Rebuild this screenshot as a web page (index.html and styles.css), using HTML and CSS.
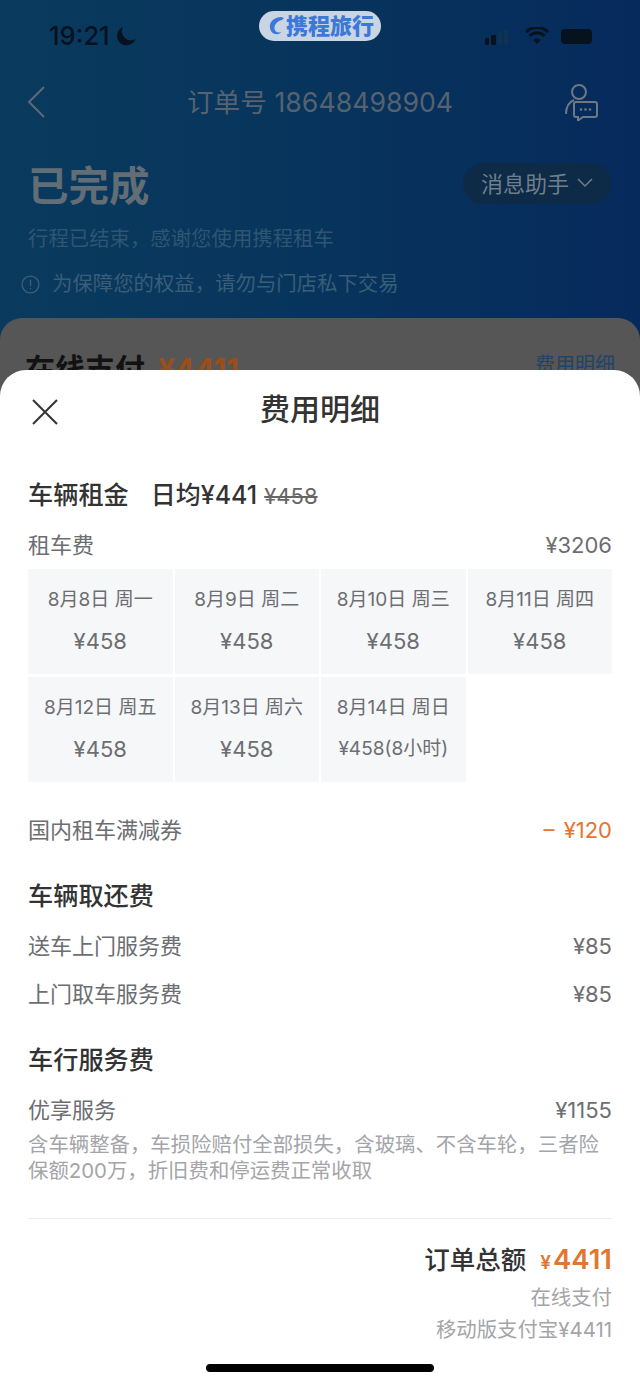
FILE: index.html
```html
<!DOCTYPE html>
<html lang="zh-CN">
<head>
    <meta charset="UTF-8">
    <meta name="viewport" content="width=device-width, initial-scale=1.0">
    <title>费用明细</title>
    <link rel="stylesheet" href="styles.css">
</head>
<body>
    <div class="page">
        <!-- Dimmed order page behind the sheet -->
        <div class="order">
            <div class="status-bar">
                <div class="status-time">
                    <span>19:21</span>
                    <svg width="20" height="20" viewBox="0 0 20 20"><path d="M7 1a9.500 9.500 0 1 0 12.500 12A9 9 0 0 1 7 1z" fill="#07121f"/></svg>
                </div>
                <div class="brand">
                    <svg width="20" height="22" viewBox="0 0 20 22"><path d="M15 2C8 2 3 7 4 13c.6 4 4 7 8 6 1.500-.4 2.500-1 3-2-3 1-6 0-6.500-3C8 10 11 6 16 5l2-2z" fill="#3b78d8"/></svg>
                    <span>携程旅行</span>
                </div>
                <div class="status-icons">
                    <svg class="signal" width="26" height="16" viewBox="0 0 26 16"><rect x="0" y="9" width="4" height="7" rx="1" fill="#07121f"/><rect x="6" y="6" width="5" height="10" rx="1" fill="#07121f"/><rect x="13" y="3" width="4" height="13" rx="1" fill="#0f3353"/><rect x="19" y="0" width="4" height="16" rx="1" fill="#0f3353"/></svg>
                    <svg class="wifi" width="24" height="18" viewBox="0 0 24 18"><path d="M12 17l-3.500-4a5 5 0 0 1 7 0zM5.500 10L3.500 7.800a12 12 0 0 1 17 0L18.500 10a9 9 0 0 0-13 0zM2 6.200L0 4a17 17 0 0 1 24 0l-2 2.200a14 14 0 0 0-20 0z" fill="#07121f"/></svg>
                    <div class="battery"></div>
                </div>
            </div>

            <div class="nav">
                <svg class="nav-back" width="20" height="32" viewBox="0 0 20 32"><path d="M18 1L3 16l15 15" fill="none" stroke="#5c6b78" stroke-width="2"/></svg>
                <div class="nav-title">订单号 18648498904</div>
                <svg class="nav-user" width="36" height="38" viewBox="0 0 36 38"><g fill="none" stroke="#6d7883" stroke-width="2"><circle cx="15" cy="9" r="7"/><path d="M2 31c0-7 3-12 8-14"/><path d="M12 19h19a2 2 0 0 1 2 2v11a2 2 0 0 1-2 2H19l-5 3.500V34h-2a2 2 0 0 1-2-2V21a2 2 0 0 1 2-2z"/></g><g fill="#6d7883"><circle cx="17" cy="26.500" r="1.300"/><circle cx="21.500" cy="26.500" r="1.300"/><circle cx="26" cy="26.500" r="1.300"/></g></svg>
            </div>

            <div class="state-row">
                <h1 class="state-title">已完成</h1>
                <div class="helper">
                    <span class="helper-text">消息助手</span>
                    <svg width="16" height="10" viewBox="0 0 16 10"><path d="M1 1l7 7 7-7" fill="none" stroke="#6d7f8e" stroke-width="1.500"/></svg>
                </div>
            </div>
            <p class="state-sub">行程已结束，感谢您使用携程租车</p>
            <div class="notice">
                <svg width="19" height="19" viewBox="0 0 18 18"><circle cx="9" cy="9" r="8" fill="none" stroke="#3f5f78" stroke-width="1.200"/><path d="M9 4.500v6M9 12v1.500" stroke="#3f5f78" stroke-width="1.200"/></svg>
                <span>为保障您的权益，请勿与门店私下交易</span>
            </div>

            <div class="pay-card">
                <div class="pay-left"><span>在线支付</span><span class="pay-amount">¥4411</span></div>
                <div class="pay-link">费用明细</div>
            </div>
        </div>

        <!-- Fee detail sheet -->
        <div class="sheet">
            <div class="sheet-head">
                <svg class="sheet-close" width="28" height="28" viewBox="0 0 28 28"><path d="M2 2l24 24M26 2L2 26" fill="none" stroke="#333" stroke-width="2"/></svg>
                <h2 class="sheet-title">费用明细</h2>
            </div>

            <div class="section-head rent-head">
                <span class="section-name">车辆租金</span>
                <span class="daily">日均¥441</span>
                <s class="daily-old">¥458</s>
            </div>
            <div class="row"><span>租车费</span><span>¥3206</span></div>

            <div class="days">
                <div class="day"><div class="day-date">8月8日 周一</div><div class="day-price">¥458</div></div>
                <div class="day"><div class="day-date">8月9日 周二</div><div class="day-price">¥458</div></div>
                <div class="day"><div class="day-date">8月10日 周三</div><div class="day-price">¥458</div></div>
                <div class="day"><div class="day-date">8月11日 周四</div><div class="day-price">¥458</div></div>
                <div class="day"><div class="day-date">8月12日 周五</div><div class="day-price">¥458</div></div>
                <div class="day"><div class="day-date">8月13日 周六</div><div class="day-price">¥458</div></div>
                <div class="day"><div class="day-date">8月14日 周日</div><div class="day-price day-price-small">¥458(8小时)</div></div>
            </div>

            <div class="row coupon-row"><span>国内租车满减券</span><span class="discount">– ¥120</span></div>

            <div class="section-head"><span class="section-name">车辆取还费</span></div>
            <div class="row"><span>送车上门服务费</span><span>¥85</span></div>
            <div class="row"><span>上门取车服务费</span><span>¥85</span></div>

            <div class="section-head"><span class="section-name">车行服务费</span></div>
            <div class="row"><span>优享服务</span><span>¥1155</span></div>
            <p class="service-note">含车辆整备，车损险赔付全部损失，含玻璃、不含车轮，三者险保额200万，折旧费和停运费正常收取</p>

            <div class="total">
                <div class="total-line">
                    <span class="total-label">订单总额</span>
                    <span class="total-amount"><small>¥</small>4411</span>
                </div>
                <div class="total-note">在线支付</div>
                <div class="total-note">移动版支付宝¥4411</div>
            </div>

            <div class="home-bar"></div>
        </div>
    </div>
</body>
</html>
```

FILE: styles.css
```css
* {
    margin: 0;
    padding: 0;
    box-sizing: border-box;
}

body {
    width: 640px;
    height: 1384px;
    overflow: hidden;
    background: #fff;
    font-family: Inter, "Noto Sans CJK SC", sans-serif;
}

.page {
    position: relative;
    width: 640px;
    height: 1384px;
    overflow: hidden;
}

/* Order page (dimmed) */
.order {
    height: 420px;
    background: linear-gradient(90deg, #0a3a5e 0%, #07345c 50%, #062a5c 100%);
}

.status-bar {
    height: 72px;
    padding: 18px 48px 0 49px;
    display: flex;
    justify-content: space-between;
    align-items: flex-start;
    position: relative;
}

.status-time {
    display: flex;
    align-items: center;
    gap: 6px;
    color: #07121f;
    font-size: 25.5px;
    font-weight: 500;
    line-height: 36px;
}

.brand {
    position: absolute;
    left: 259px;
    top: 11px;
    width: 122px;
    height: 30px;
    border-radius: 15px;
    background: #c9d5e3;
    display: flex;
    align-items: center;
    justify-content: center;
    color: #3b78d8;
    font-size: 22px;
    font-weight: 900;
    line-height: 30px;
    white-space: nowrap;
}

.status-icons {
    display: flex;
    align-items: center;
    height: 36px;
}

.signal {
    margin-top: 2px;
    margin-right: 14px;
}

.wifi {
    margin-right: 12px;
}

.battery {
    width: 31px;
    height: 15px;
    border-radius: 4px;
    background: #07121f;
}

.nav {
    height: 60px;
    padding: 0 26px;
    display: grid;
    grid-template-columns: 1fr auto 1fr;
    align-items: center;
}

.nav-title {
    color: #56626f;
    font-size: 26.7px;
    line-height: 60px;
}

.nav-user {
    justify-self: end;
    margin-right: 14px;
}

.state-row {
    margin-top: 20px;
    padding: 0 28px;
    height: 70px;
    display: flex;
    justify-content: space-between;
    align-items: center;
}

.state-title {
    color: #626d75;
    font-size: 40.5px;
    font-weight: 700;
    line-height: 70px;
}

.helper {
    height: 41px;
    width: 149px;
    margin-bottom: 8px;
    padding-left: 18px;
    border-radius: 21px;
    background: #0d2a47;
    color: #6d7f8e;
    font-size: 22px;
    display: flex;
    align-items: center;
    gap: 8px;
}

.helper-text {
    margin-bottom: 3px;
}

.state-sub {
    padding-left: 28px;
    color: #2f5570;
    font-size: 20.4px;
    line-height: 34px;
}

.notice {
    margin-top: 11px;
    padding-left: 21px;
    display: flex;
    align-items: center;
    gap: 12px;
    color: #3a5d78;
    font-size: 20.4px;
    line-height: 34px;
}

.pay-card {
    margin-top: 17px;
    height: 102px;
    padding: 33px 25px 0 25px;
    border-radius: 22px 22px 0 0;
    background: #565656;
    display: flex;
    justify-content: space-between;
    align-items: flex-start;
}

.pay-left {
    display: flex;
    align-items: baseline;
    gap: 13px;
    color: #121212;
    font-size: 30px;
    font-weight: 700;
    line-height: 36px;
}

.pay-amount {
    color: #9a4f1a;
    font-size: 29.5px;
}

.pay-link {
    margin-top: -4px;
    color: #1f4468;
    font-size: 20px;
    line-height: 36px;
}

/* Fee detail sheet */
.sheet {
    position: absolute;
    left: 0;
    right: 0;
    top: 370px;
    bottom: 0;
    padding: 0 28px;
    background: #fff;
    border-radius: 26px 26px 0 0;
    color: #6c6e72;
}

.sheet-head {
    position: relative;
    height: 80px;
    display: flex;
    align-items: center;
    justify-content: center;
}

.sheet-close {
    position: absolute;
    left: 3px;
    top: 28px;
}

.sheet-title {
    color: #333;
    font-size: 30px;
    font-weight: 500;
    line-height: 78px;
    height: 80px;
}

.section-head {
    height: 36px;
    margin-top: 24px;
    display: flex;
    align-items: baseline;
    color: #333;
    font-weight: 500;
    line-height: 36px;
    white-space: nowrap;
}

.section-name {
    font-size: 25.2px;
}

.rent-head {
    margin-top: 27px;
}

.daily {
    margin-left: 22px;
    font-size: 25px;
}

.daily-old {
    margin-left: 7px;
    color: #666;
    font-size: 22px;
    font-weight: 400;
}

.row {
    height: 48px;
    display: flex;
    justify-content: space-between;
    align-items: baseline;
    font-size: 22px;
    line-height: 48px;
}

.section-head + .row {
    margin-top: 8px;
}

.days {
    display: grid;
    grid-template-columns: repeat(4, 1fr);
    grid-auto-rows: 105px;
    gap: 3px 2px;
}

.day {
    background: #f6f7f9;
    text-align: center;
}

.day-date {
    margin-top: 17px;
    font-size: 19px;
    line-height: 28px;
}

.day-price {
    margin-top: 13px;
    font-size: 22px;
    line-height: 28px;
}

.day-price-small {
    font-size: 19px;
}

.coupon-row {
    margin-top: 24px;
}

.discount {
    color: #e2762f;
    word-spacing: 3px;
}

.service-note {
    color: #a3a5a8;
    font-size: 20.4px;
    line-height: 26px;
    margin-top: -2px;
}

.total {
    margin-top: 34px;
    padding-top: 20px;
    border-top: 1px solid #ececec;
    display: flex;
    flex-direction: column;
    align-items: flex-end;
}

.total-line {
    height: 42px;
    margin-bottom: 1px;
    display: flex;
    align-items: baseline;
    gap: 14px;
    line-height: 40px;
}

.total-label {
    color: #333;
    font-size: 25.5px;
    font-weight: 500;
}

.total-amount {
    color: #e2762f;
    font-size: 27.5px;
    font-weight: 600;
}

.total-amount small {
    font-size: 19px;
    margin-right: 2px;
}

.total-note {
    color: #a3a5a8;
    font-size: 20.4px;
    line-height: 32px;
}

.home-bar {
    position: absolute;
    left: 206px;
    bottom: 12px;
    width: 228px;
    height: 8px;
    border-radius: 4px;
    background: #000;
}
```
